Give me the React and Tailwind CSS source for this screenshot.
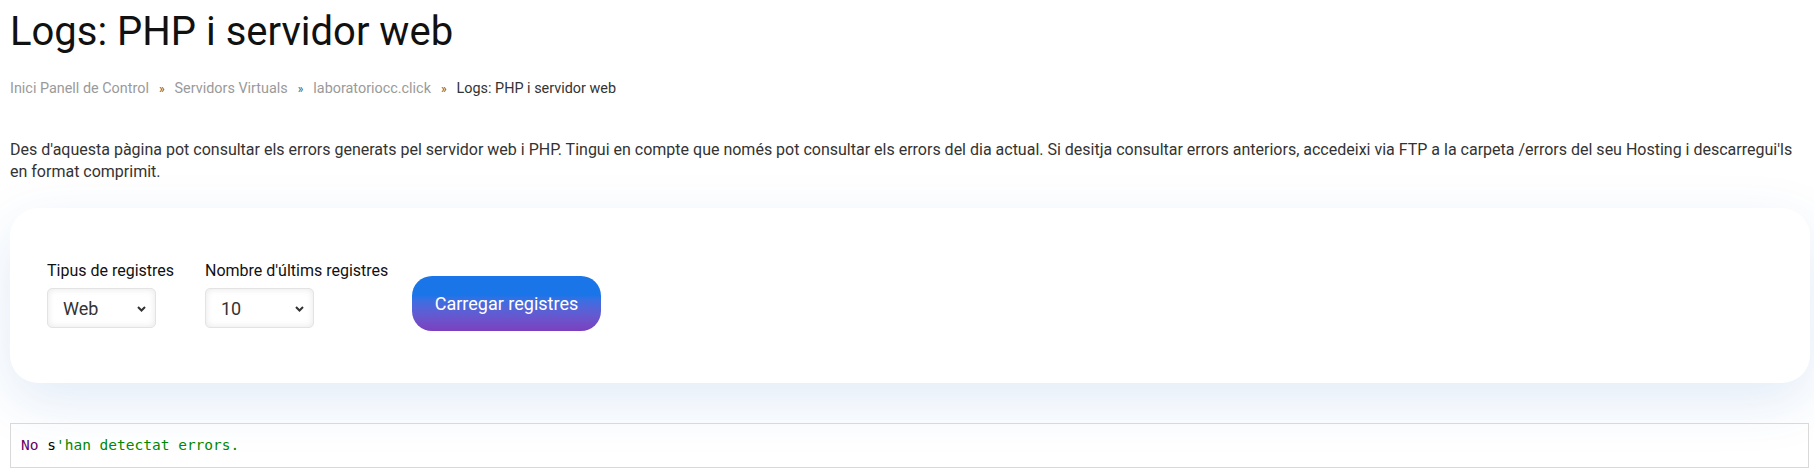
const crumbs = ["Inici Panell de Control", "Servidors Virtuals", "laboratoriocc.click"];

function Select({ value }) {
  return (
    <div className="relative h-[40px] w-[109px] rounded-[5px] border border-[#e3e3e3] bg-white shadow-[inset_0_0_7px_rgba(0,0,0,0.10)]">
      <span className="absolute left-[15px] top-[9px] text-[18px] leading-[22px] text-[#333]">{value}</span>
      <svg
        className="absolute right-[9px] top-[17px]"
        width="9"
        height="6"
        viewBox="0 0 9 6"
        fill="none"
        stroke="#333"
        strokeWidth="2"
      >
        <path d="M1 1l3.5 3.5L8 1" />
      </svg>
    </div>
  );
}

export default function App() {
  return (
    <div className="min-h-[474px] bg-white pl-[10px] pr-[4px] font-['Roboto',sans-serif]">
      {/* Title */}
      <h1 className="pt-[8px] text-[40px] font-normal leading-[48px] text-[#111]">
        Logs: PHP i servidor web
      </h1>

      {/* Breadcrumb */}
      <div className="mt-[23px] flex items-center text-[14.4px] leading-[20px]">
        {crumbs.map((c) => (
          <span key={c} className="flex items-center">
            <span className="text-[#9a9a9a]">{c}</span>
            <span className="px-[10px] text-[12px] text-[#555]">»</span>
          </span>
        ))}
        <span className="text-[#333]">Logs: PHP i servidor web</span>
      </div>

      {/* Description */}
      <p className="mt-[40px] text-[16px] leading-[22px] text-[#333]">
        Des d'aquesta pàgina pot consultar els errors generats pel servidor web i PHP. Tingui en compte que només pot
        consultar els errors del dia actual. Si desitja consultar errors anteriors, accedeixi via FTP a la carpeta
        /errors del seu Hosting i descarregui'ls en format comprimit.
      </p>

      {/* Filters card */}
      <div className="mt-[25px] flex items-start rounded-[28px] bg-white px-[37px] py-[52px] shadow-[0_18px_55px_rgba(20,100,190,0.13)]">
        <div className="w-[158px]">
          <label className="mb-[6px] block text-[16px] leading-[22px] text-[#111]">Tipus de registres</label>
          <Select value="Web" />
        </div>
        <div className="w-[207px]">
          <label className="mb-[6px] block text-[16px] leading-[22px] text-[#111]">Nombre d'últims registres</label>
          <Select value="10" />
        </div>
        <button className="mt-[16px] h-[55px] w-[189px] rounded-[20px] bg-linear-to-b from-[#1a75e8] from-35% to-[#7c3fbe] text-[18px] text-white">
          Carregar registres
        </button>
      </div>

      {/* Log output */}
      <pre className="mr-[1px] mt-[40px] border border-[#d9d9d9] px-[10px] py-[11px] font-['DejaVu_Sans_Mono',monospace] text-[14.5px] leading-[21px]">
        <span className="text-[#660066]">No</span>
        <span className="text-[#000]"> s</span>
        <span className="text-[#008800]">'han detectat errors.</span>
      </pre>
    </div>
  );
}
